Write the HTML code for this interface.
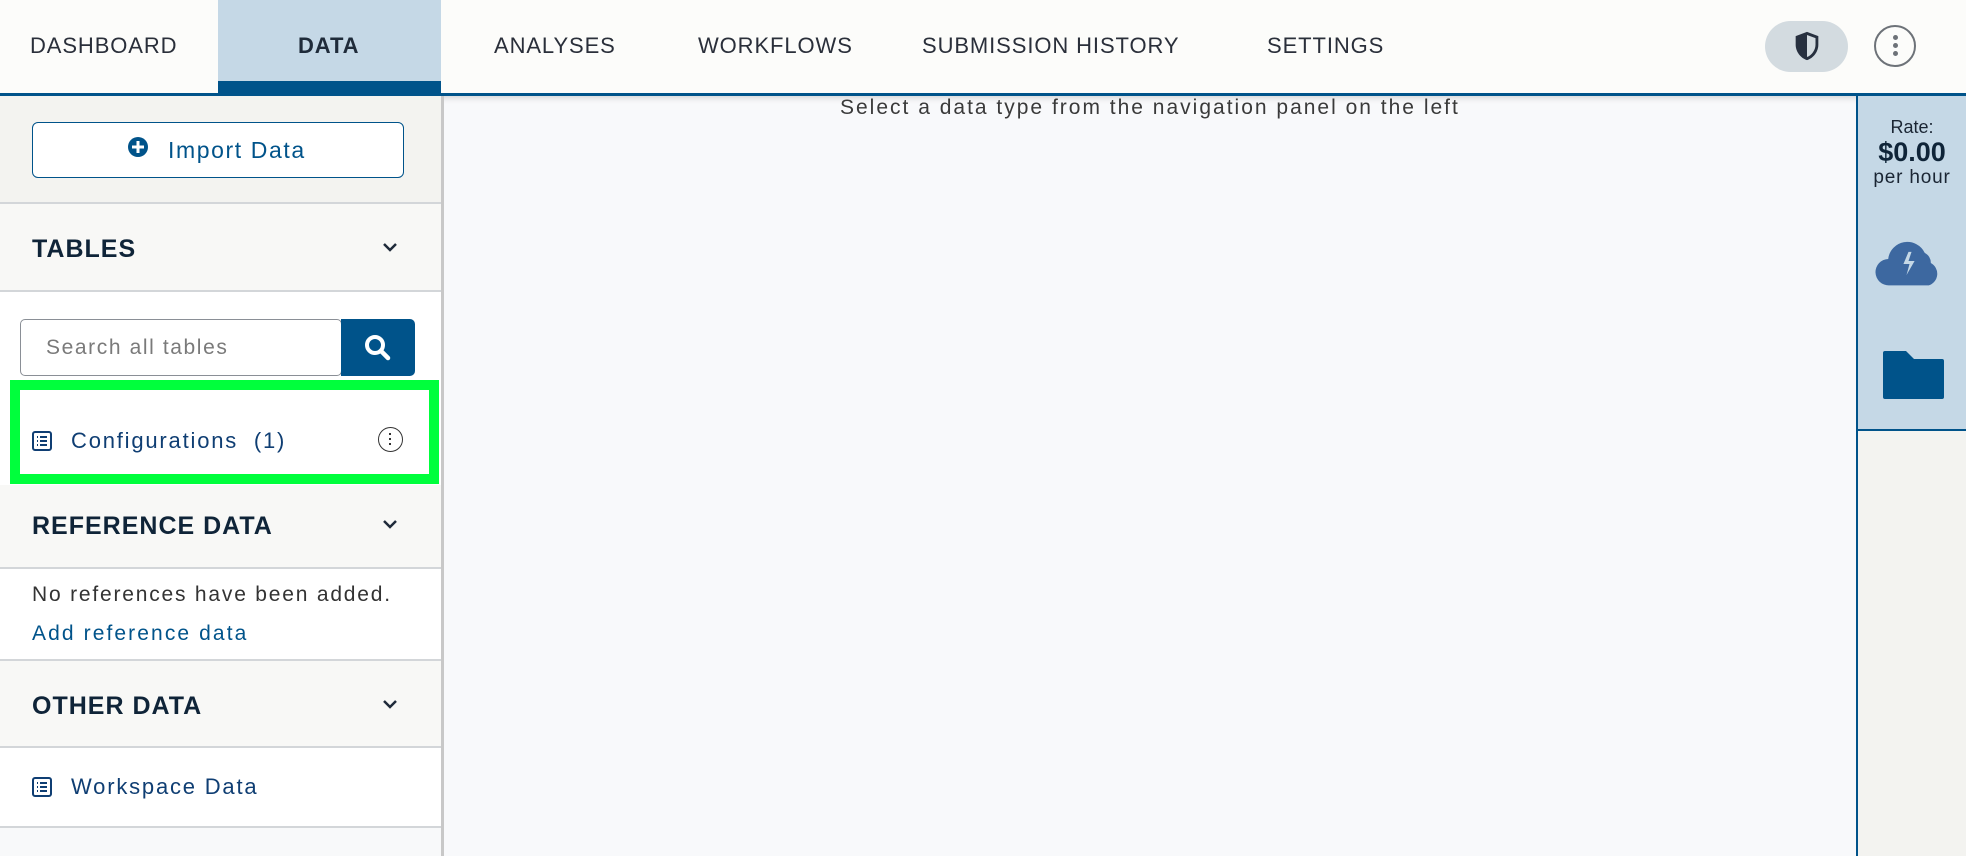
<!DOCTYPE html>
<html><head><style>
*{box-sizing:border-box;margin:0;padding:0}
body{width:1966px;height:856px;overflow:hidden;font-family:"Liberation Sans",sans-serif;background:#f8f9fb;position:relative;color:#2d2d2d}
.abs{position:absolute}
.hdr{left:0;top:0;width:1966px;height:96px;background:#fcfcfa;border-bottom:3px solid #00538a;box-shadow:0 2px 6px rgba(0,0,0,.15)}
.nav{top:33px;font-size:22px;color:#2a2f3a;letter-spacing:.9px}
.side{left:0;top:96px;width:444px;height:760px;background:#f8f9fa;border-right:3px solid #c8c8c8}
.sec{position:absolute;left:0;width:441px;border-bottom:2px solid #d3d6d9}
.h{position:absolute;left:32px;font-size:25px;font-weight:bold;color:#0f2438;letter-spacing:1px}
.link{color:#00538a}
.t{letter-spacing:1.8px}
</style></head><body>
<div class="abs hdr"></div>
<div class="abs" style="left:218px;top:0;width:223px;height:96px;background:#c5d8e6;border-bottom:15px solid #00538a"></div>
<div class="abs nav" style="left:30px">DASHBOARD</div>
<div class="abs nav" style="left:298px;font-weight:bold;color:#1f2b3a">DATA</div>
<div class="abs nav" style="left:494px">ANALYSES</div>
<div class="abs nav" style="left:698px">WORKFLOWS</div>
<div class="abs nav" style="left:922px">SUBMISSION HISTORY</div>
<div class="abs nav" style="left:1267px">SETTINGS</div>
<div class="abs" style="left:1765px;top:21px;width:83px;height:51px;border-radius:26px;background:#d3dbe0"></div>
<svg class="abs" style="left:1790px;top:29px" width="34" height="34" viewBox="0 0 24 24"><path d="M12 2L4 5v6c0 5 3.4 9.4 8 11 4.6-1.6 8-6 8-11V5z" fill="#27303f"/><path d="M12 4.2v15.6c3.4-1.4 6-5 6-8.8V6.4z" fill="#d3dbe0"/></svg>
<div class="abs" style="left:1874px;top:25px;width:42px;height:42px;border-radius:50%;border:2.5px solid #6d7278"></div>
<div class="abs" style="left:1893px;top:35px;width:5px;height:5px;border-radius:50%;background:#6d7278;box-shadow:0 8px 0 #6d7278,0 16px 0 #6d7278"></div>

<div class="abs side">
 <div class="sec" style="top:0;height:108px;background:#f3f3f0"></div>
 <div class="sec" style="top:108px;height:88px;background:#f8f8f6"><div class="h" style="top:31px">TABLES</div>
  <svg style="position:absolute;left:382px;top:38px" width="16" height="12" viewBox="0 0 16 12"><path d="M2 2l6 6 6-6" stroke="#1f2b3a" stroke-width="2.5" fill="none"/></svg></div>
 <div style="position:absolute;left:0;top:196px;width:441px;height:193px;background:#fff"></div>
 <div class="sec" style="top:389px;height:84px;background:#f8f8f6"><div class="h" style="top:27px">REFERENCE DATA</div>
  <svg style="position:absolute;left:382px;top:34px" width="16" height="12" viewBox="0 0 16 12"><path d="M2 2l6 6 6-6" stroke="#1f2b3a" stroke-width="2.5" fill="none"/></svg></div>
 <div class="sec" style="top:473px;height:92px;background:#fff">
  <div class="t" style="position:absolute;left:32px;top:14px;font-size:21px;color:#333">No references have been added.</div>
  <div class="link t" style="position:absolute;left:32px;top:53px;font-size:21px;letter-spacing:2.1px">Add reference data</div></div>
 <div class="sec" style="top:565px;height:87px;background:#f8f8f6"><div class="h" style="top:31px">OTHER DATA</div>
  <svg style="position:absolute;left:382px;top:38px" width="16" height="12" viewBox="0 0 16 12"><path d="M2 2l6 6 6-6" stroke="#1f2b3a" stroke-width="2.5" fill="none"/></svg></div>
 <div class="sec" style="top:652px;height:80px;background:#fff">
  <svg style="position:absolute;left:32px;top:29px" width="20" height="20" viewBox="0 0 20 20"><rect x="1" y="1" width="18" height="18" rx="2" fill="none" stroke="#0f3e73" stroke-width="2"/><path d="M5 6h1M5 10h1M5 14h1M8 6h7M8 10h7M8 14h7" stroke="#0f3e73" stroke-width="2"/></svg>
  <div class="t" style="position:absolute;left:71px;top:26px;font-size:22px;color:#0f3e73">Workspace Data</div></div>
</div>
<div class="abs" style="left:32px;top:122px;width:372px;height:56px;border:1.5px solid #00538a;border-radius:6px;background:#fff"></div>
<svg class="abs" style="left:127px;top:136px" width="22" height="22" viewBox="0 0 22 22"><circle cx="11" cy="11" r="10" fill="#00538a"/><path d="M11 5v12M5 11h12" stroke="#fff" stroke-width="3"/></svg>
<div class="abs link t" style="left:168px;top:137px;font-size:23px;letter-spacing:1.6px">Import Data</div>
<div class="abs" style="left:20px;top:319px;width:322px;height:57px;border:1.5px solid #8a8f96;border-radius:5px;background:#fff"></div>
<div class="abs t" style="left:46px;top:336px;font-size:21px;color:#7a7a7a;letter-spacing:1.6px">Search all tables</div>
<div class="abs" style="left:341px;top:319px;width:74px;height:57px;background:#00538a;border-radius:0 5px 5px 0"></div>
<svg class="abs" style="left:363px;top:333px" width="30" height="30" viewBox="0 0 30 30"><circle cx="12" cy="12" r="8" fill="none" stroke="#fff" stroke-width="4"/><path d="M18 18l7 7" stroke="#fff" stroke-width="4.5" stroke-linecap="round"/></svg>
<div class="abs" style="left:10px;top:380px;width:429px;height:104px;border:10px solid #00ff3c;background:#fff"></div>
<svg class="abs" style="left:32px;top:431px" width="20" height="20" viewBox="0 0 20 20"><rect x="1" y="1" width="18" height="18" rx="2" fill="none" stroke="#0f3e73" stroke-width="2"/><path d="M5 6h1M5 10h1M5 14h1M8 6h7M8 10h7M8 14h7" stroke="#0f3e73" stroke-width="2"/></svg>
<div class="abs t" style="left:71px;top:428px;font-size:22px;color:#0f3e73;white-space:pre">Configurations  (1)</div>
<div class="abs" style="left:378px;top:427px;width:25px;height:25px;border-radius:50%;border:1.5px solid #333"></div>
<div class="abs" style="left:389px;top:433px;width:2px;height:2px;background:#333;box-shadow:0 5px 0 #333,0 10px 0 #333"></div>

<div class="abs" style="left:840px;top:96px;font-size:21px;color:#3a3a3a;letter-spacing:2px">Select a data type from the navigation panel on the left</div>

<div class="abs" style="left:1856px;top:96px;width:110px;height:335px;background:#c5d8e6;border-left:2px solid #00538a;border-bottom:2px solid #00538a"></div>
<div class="abs" style="left:1856px;top:96px;width:110px;height:760px;border-left:2px solid #00538a"></div>
<div class="abs" style="left:1858px;top:431px;width:108px;height:425px;background:#f3f3f0"></div>
<div class="abs" style="left:1858px;top:117px;width:108px;text-align:center;font-size:18px;color:#1a2533">Rate:</div>
<div class="abs" style="left:1858px;top:137px;width:108px;text-align:center;font-size:27px;font-weight:bold;color:#0f2438">$0.00</div>
<div class="abs" style="left:1858px;top:167px;width:108px;text-align:center;font-size:19px;color:#1a2533;letter-spacing:.8px">per hour</div>
<svg class="abs" style="left:1875px;top:238px" width="67" height="50" viewBox="0 0 66 48"><path d="M14 46a13 13 0 0 1-1-26 19 19 0 0 1 36-6 11 11 0 0 1 6 10 12 12 0 0 1-2 22z" fill="#3d68a0"/><path d="M33 13l-5 12h6l-3 11 8-14h-6l3-9z" fill="#c5d8e6"/></svg>
<svg class="abs" style="left:1880px;top:350px" width="66" height="50" viewBox="0 0 66 50"><path d="M3 3q0-2 2-2h21l8 8h28q2 0 2 2v36q0 2-2 2H5q-2 0-2-2z" fill="#00538a"/></svg>
</body></html>
